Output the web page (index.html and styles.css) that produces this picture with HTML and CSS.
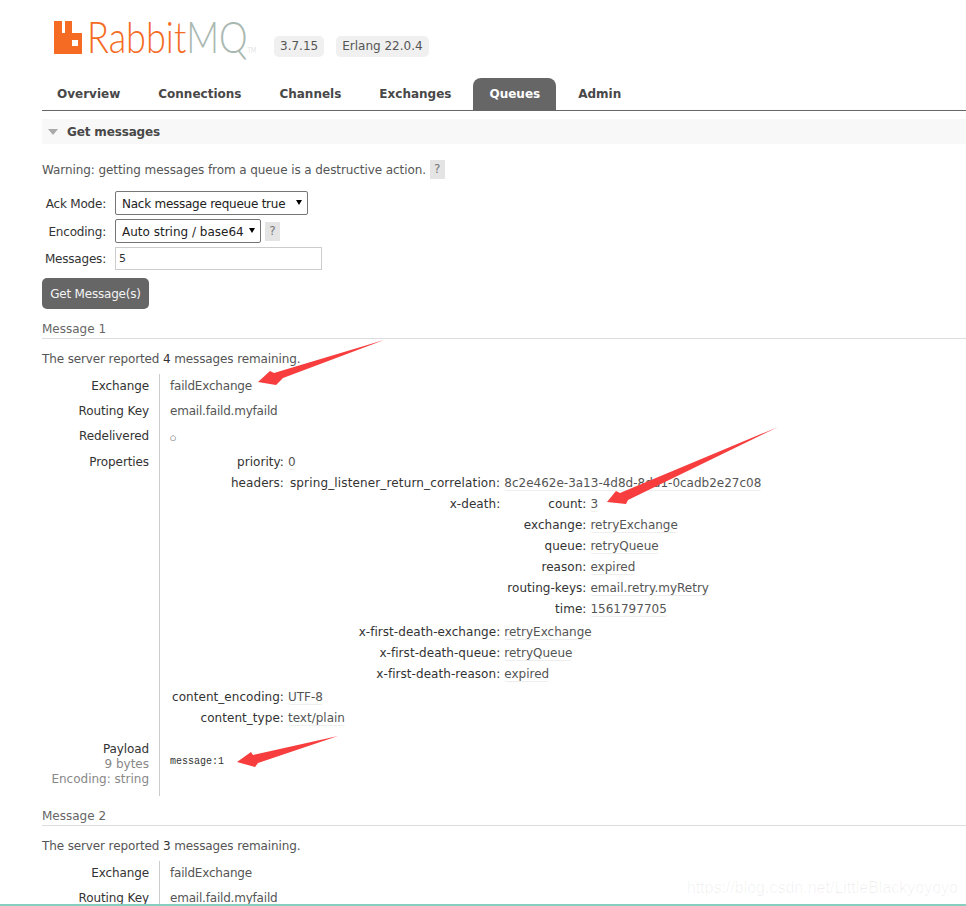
FILE: index.html
```html
<!DOCTYPE html>
<html lang="en">

<head>
    <meta charset="UTF-8">
    <title>RabbitMQ Management</title>
    <link rel="stylesheet" href="styles.css">
</head>

<body>
    <div class="page">
        <div class="header">
            <div class="logo">
                <svg class="logoIcon" width="28" height="33" viewBox="0 0 28 33">
                    <path fill="#f56b24" fill-rule="evenodd" d="M0 0H8V12H11V0H18V12H28V33H0ZM18 19V25H24V19Z" />
                </svg>
                <span class="logoText"><span class="logoRabbit">Rabbit</span><span class="logoMq">MQ</span><span class="logoTm">TM</span></span>
            </div>
            <span class="badge">3.7.15</span>
            <span class="badge">Erlang 22.0.4</span>
        </div>

        <ul class="tabs">
            <li>Overview</li>
            <li>Connections</li>
            <li>Channels</li>
            <li>Exchanges</li>
            <li class="active">Queues</li>
            <li>Admin</li>
        </ul>

        <div class="content">
            <h2 class="sectionTitle"><span class="triangle"></span>Get messages</h2>

            <p class="warning">Warning: getting messages from a queue is a destructive action. <span class="help">?</span></p>

            <div class="formGrid">
                <label>Ack Mode:</label>
                <div class="selectWrap"><select class="ackSelect">
                        <option>Nack message requeue true</option>
                    </select></div>
                <label>Encoding:</label>
                <div class="encodingRow">
                    <div class="selectWrap"><select class="encSelect">
                            <option>Auto string / base64</option>
                        </select></div>
                    <span class="help">?</span>
                </div>
                <label>Messages:</label>
                <input type="text" class="countInput" value="5">
            </div>
            <button class="getButton">Get Message(s)</button>

            <h3 class="messageTitle">Message 1</h3>
            <p class="remaining">The server reported <b>4</b> messages remaining.</p>

            <table class="facts">
                <tr>
                    <th>Exchange</th>
                    <td>faildExchange</td>
                </tr>
                <tr>
                    <th>Routing Key</th>
                    <td>email.faild.myfaild</td>
                </tr>
                <tr>
                    <th>Redelivered</th>
                    <td><span class="circle">○</span></td>
                </tr>
                <tr>
                    <th>Properties</th>
                    <td class="propsCell">
                        <table class="mini">
                            <tr>
                                <th>priority:</th>
                                <td><span class="val">0</span></td>
                            </tr>
                            <tr>
                                <th>headers:</th>
                                <td class="nested">
                                    <table class="mini headersTable">
                                        <tr>
                                            <th class="longLabel">spring_listener_return_correlation:</th>
                                            <td><span class="val">8c2e462e-3a13-4d8d-8dd1-0cadb2e27c08</span></td>
                                        </tr>
                                        <tr>
                                            <th>x-death:</th>
                                            <td class="nested">
                                                <table class="mini deathTable">
                                                    <tr>
                                                        <th>count:</th>
                                                        <td><span class="val">3</span></td>
                                                    </tr>
                                                    <tr>
                                                        <th>exchange:</th>
                                                        <td><span class="val">retryExchange</span></td>
                                                    </tr>
                                                    <tr>
                                                        <th>queue:</th>
                                                        <td><span class="val">retryQueue</span></td>
                                                    </tr>
                                                    <tr>
                                                        <th>reason:</th>
                                                        <td><span class="val">expired</span></td>
                                                    </tr>
                                                    <tr>
                                                        <th>routing-keys:</th>
                                                        <td><span class="val">email.retry.myRetry</span></td>
                                                    </tr>
                                                    <tr>
                                                        <th>time:</th>
                                                        <td><span class="val">1561797705</span></td>
                                                    </tr>
                                                </table>
                                            </td>
                                        </tr>
                                        <tr>
                                            <th>x-first-death-exchange:</th>
                                            <td><span class="val">retryExchange</span></td>
                                        </tr>
                                        <tr>
                                            <th>x-first-death-queue:</th>
                                            <td><span class="val">retryQueue</span></td>
                                        </tr>
                                        <tr>
                                            <th>x-first-death-reason:</th>
                                            <td><span class="val">expired</span></td>
                                        </tr>
                                    </table>
                                </td>
                            </tr>
                            <tr>
                                <th>content_encoding:</th>
                                <td><span class="val">UTF-8</span></td>
                            </tr>
                            <tr>
                                <th>content_type:</th>
                                <td><span class="val">text/plain</span></td>
                            </tr>
                        </table>
                    </td>
                </tr>
                <tr>
                    <th class="payloadHead">Payload<br><span class="sub">9 bytes</span><br><span class="sub">Encoding: string</span></th>
                    <td class="payloadCell"><pre class="payload">message:1</pre></td>
                </tr>
            </table>

            <h3 class="messageTitle">Message 2</h3>
            <p class="remaining">The server reported <b>3</b> messages remaining.</p>

            <table class="facts">
                <tr>
                    <th>Exchange</th>
                    <td>faildExchange</td>
                </tr>
                <tr>
                    <th>Routing Key</th>
                    <td>email.faild.myfaild</td>
                </tr>
            </table>
        </div>

        <!-- red arrows drawn on top of the screenshot -->
        <svg class="arrows" width="966" height="906" viewBox="0 0 966 906">
            <polygon fill="#f73d3d" points="258,382 270,371 274,373 384,340 283,378 276,385" />
            <polygon fill="#f73d3d" points="607,502 616,491 620,493 778,427 628,500 626,504" />
            <polygon fill="#f73d3d" points="237,762 251,752 253,755 338,736 258,763 255,767" />
        </svg>
        <div class="watermark">https://blog.csdn.net/LittleBlackyoyoyo</div>
        <div class="bottomLine"></div>
    </div>
</body>

</html>
```

FILE: styles.css
```css
html,
body {
    margin: 0;
    padding: 0;
    background-color: #fff;
}

body {
    font-family: "DejaVu Sans", Verdana, sans-serif;
    font-size: 12px;
    color: #484848;
}

.page {
    position: relative;
    width: 966px;
    height: 906px;
    overflow: hidden;
}

.header {
    display: flex;
    align-items: flex-end;
    height: 57px;
    padding-left: 54px;
    box-sizing: border-box;
}

.logo {
    display: flex;
    align-items: flex-end;
    height: 54px;
    width: 220px;
    flex: none;
    padding-bottom: 3px;
    box-sizing: border-box;
}

.logoIcon {
    margin-right: 5px;
    flex: none;
}

.logoText {
    flex: none;
    white-space: nowrap;
    font-family: "Lato", sans-serif;
    font-weight: 300;
    font-size: 44px;
    line-height: 32px;
    transform: scaleX(0.82);
    transform-origin: left bottom;
}

.logoRabbit {
    color: #f56b24;
}

.logoMq {
    color: #a9b8b1;
}

.logoTm {
    color: #ccc;
    font-size: 7px;
    line-height: 8px;
}

.badge {
    background-color: #f0f0f0;
    border-radius: 5px;
    padding: 0 6px;
    margin-right: 12px;
    line-height: 21px;
    color: #555;
}

.tabs {
    display: flex;
    gap: 6px;
    list-style: none;
    margin: 21px 0 0 42px;
    padding: 0;
    height: 32px;
    border-bottom: 1px solid #666;
}

.tabs li {
    padding: 0 16px;
    line-height: 32px;
    font-weight: bold;
    font-size: 12px;
    color: #484848;
}

.tabs li:first-child {
    margin-left: -1px;
}

.tabs li.active {
    background-color: #666;
    color: #fff;
    border-radius: 8px 8px 0 0;
}

.content {
    padding-left: 42px;
}

.sectionTitle {
    display: flex;
    align-items: center;
    margin: 8px 0 0 0;
    height: 25px;
    background-color: #f8f8f8;
    font-size: 12px;
    font-weight: bold;
    letter-spacing: -0.15px;
    color: #484848;
}

.triangle {
    width: 0;
    height: 0;
    margin: 0 9px 0 6px;
    border-left: 5px solid transparent;
    border-right: 5px solid transparent;
    border-top: 6px solid #aaa;
}

.warning {
    margin: 16px 0 12px 0;
    height: 19px;
    line-height: 19px;
    letter-spacing: -0.08px;
    color: #555;
}

.help {
    display: inline-block;
    width: 15px;
    height: 19px;
    line-height: 19px;
    text-align: center;
    background-color: #e4e4e4;
    color: #777;
    margin-left: 0;
    letter-spacing: 0;
    vertical-align: 1px;
}

.formGrid {
    display: grid;
    grid-template-columns: 64px auto;
    justify-content: start;
    align-items: center;
    column-gap: 9px;
    row-gap: 4px;
}

.formGrid label {
    padding-top: 1px;
    text-align: right;
    letter-spacing: -0.2px;
    color: #333;
}

.selectWrap {
    position: relative;
    justify-self: start;
}

.selectWrap::after {
    content: "";
    position: absolute;
    right: 6px;
    top: 9px;
    border-left: 3px solid transparent;
    border-right: 3px solid transparent;
    border-top: 5px solid #000;
}

select {
    display: block;
    appearance: none;
    height: 24px;
    padding: 1px 0 0 6px;
    font-family: inherit;
    font-size: 12px;
    color: #222;
    background-color: #fff;
    border: 1px solid #767676;
    border-radius: 2px;
}

.ackSelect {
    width: 193px;
    letter-spacing: -0.25px;
}

.encSelect {
    width: 146px;
}

.encodingRow {
    display: flex;
    align-items: center;
    gap: 4px;
}

.countInput {
    width: 207px;
    height: 23px;
    box-sizing: border-box;
    padding: 0 3px;
    font-family: inherit;
    font-size: 11px;
    color: #333;
    border: 1px solid #ccc;
}

.getButton {
    display: block;
    width: 107px;
    height: 31px;
    margin-top: 8px;
    padding: 0;
    border: 0;
    border-radius: 5px;
    background-color: #666;
    color: #f4f4f4;
    font-family: inherit;
    font-size: 12px;
    letter-spacing: -0.2px;
}

.messageTitle {
    margin: 12px 0 0 0;
    height: 17px;
    line-height: 17px;
    font-size: 12px;
    font-weight: normal;
    color: #666;
    border-bottom: 1px solid #ddd;
}

.remaining {
    margin: 13px 0 0 0;
    line-height: 15px;
    letter-spacing: -0.12px;
    color: #555;
}

.remaining b {
    font-weight: normal;
    color: #333;
}

table {
    border-collapse: collapse;
    border-spacing: 0;
}

.facts {
    margin-top: 7px;
}

.facts > tbody > tr > th {
    width: 107px;
    padding: 5px 10px 5px 0;
    line-height: 15px;
    text-align: right;
    vertical-align: top;
    font-weight: normal;
    letter-spacing: -0.1px;
    color: #333;
    border-right: 1px solid #ccc;
}

.facts > tbody > tr > td {
    padding: 5px 0 5px 10px;
    line-height: 15px;
    vertical-align: top;
    letter-spacing: -0.2px;
    color: #555;
}

.circle {
    display: block;
    height: 16px;
    font-size: 7px;
    line-height: 19px;
    color: #333;
}

.facts > tbody > tr > td.propsCell {
    padding: 2px 0 5px 10px;
    letter-spacing: 0;
}

.mini th {
    padding: 3px 2px;
    line-height: 15px;
    text-align: right;
    vertical-align: top;
    font-weight: normal;
    letter-spacing: 0.05px;
    color: #333;
    white-space: nowrap;
}

.mini td {
    padding: 3px 2px;
    line-height: 15px;
    vertical-align: top;
    color: #555;
    white-space: nowrap;
}

.mini td.nested {
    padding: 0 0 2px 0;
}

.mini th.longLabel {
    letter-spacing: 0.14px;
}

.val {
    display: inline-block;
    border-bottom: 1px solid #eee;
    border-radius: 3px;
    line-height: 14px;
}

.headersTable {
    margin-left: 2px;
}

.deathTable {
    margin-left: 3px;
}

.facts > tbody > tr > th.payloadHead {
    padding-top: 8px;
    padding-bottom: 9px;
}

.sub {
    color: #888;
    letter-spacing: 0;
}

.payload {
    margin: 17px 0 0 0;
    font-family: "Liberation Mono", monospace;
    font-size: 10px;
    line-height: 12px;
    letter-spacing: 0;
    color: #333;
}

.arrows {
    position: absolute;
    left: 0;
    top: 0;
    pointer-events: none;
}

.watermark {
    position: absolute;
    right: 8px;
    top: 879px;
    font-family: "Liberation Sans", sans-serif;
    font-size: 16px;
    color: rgba(0, 0, 0, 0.06);
}

.bottomLine {
    position: absolute;
    left: 0;
    right: 0;
    bottom: 0;
    height: 2px;
    background-color: #86cfbf;
}
```
